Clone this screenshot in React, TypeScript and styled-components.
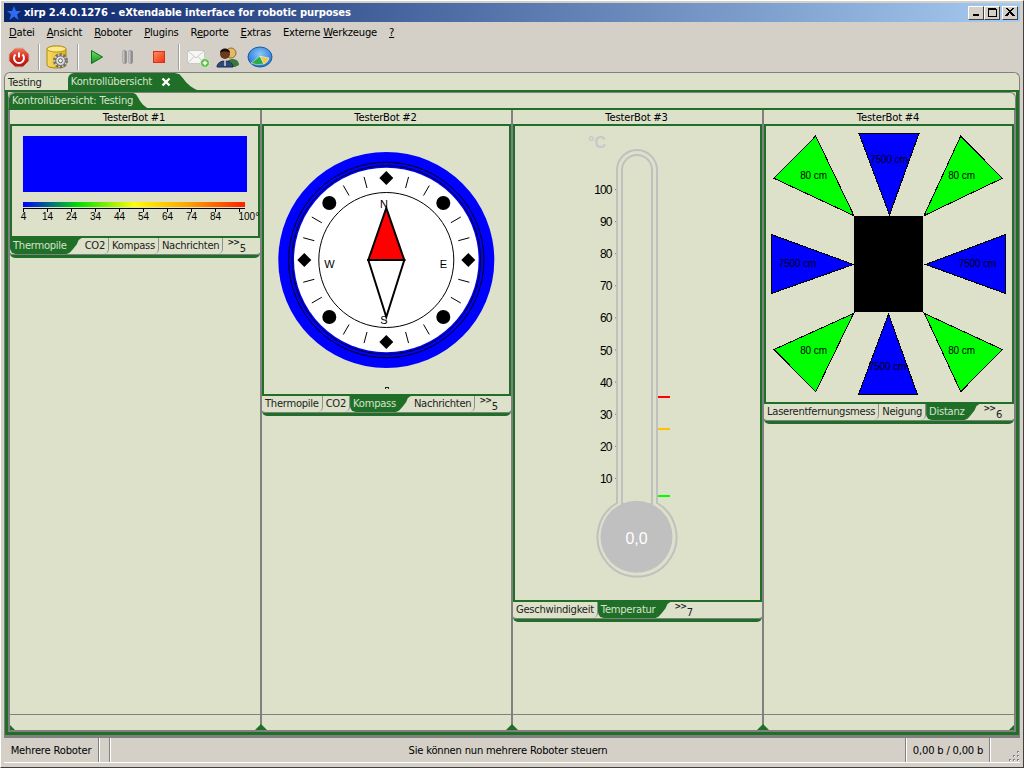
import React from 'react';
import styled, { createGlobalStyle } from 'styled-components';

const Global = createGlobalStyle`
  html, body { margin: 0; padding: 0; background: #d4d0c8; }
  #root { width: 1024px; height: 768px; overflow: hidden; }
  * { box-sizing: border-box; }
`;

const UI = `"DejaVu Sans", "Liberation Sans", sans-serif`;
const ARIAL = `"Liberation Sans", sans-serif`;
const GREEN = '#1f6f28';
const LIGHT = '#dde1ca';
const GREY = '#808080';

const tailClip = (t: number) =>
  `polygon(0 0, calc(100% - ${t}px) 0, calc(100% - ${t * 0.8}px) 8%, calc(100% - ${t * 0.65}px) 30%, calc(100% - ${t * 0.5}px) 55%, calc(100% - ${t * 0.3}px) 78%, calc(100% - ${t * 0.12}px) 92%, 100% 100%, 0 100%)`;

const Win = styled.div`
  width: 1024px; height: 768px; display: flex; flex-direction: column;
  background: #d4d0c8; font-family: ${UI}; font-size: 10px; letter-spacing: -0.2px; color: #000;
  padding: 2px 3px 4px 3px; border-right: 1px solid #404040; border-bottom: 1px solid #404040;
  border-left: 1px solid #fff; border-top: 1px solid #fff;
`;
const TitleBar = styled.div`
  height: 19px; flex: none; display: flex; align-items: center; gap: 3px; padding: 0 2px 0 3px;
  background: linear-gradient(90deg, #0a246a, #a6caf0);
  color: #fff; font: bold 10px "DejaVu Sans", sans-serif; letter-spacing: -0.12px;
`;
const TitleText = styled.span`flex: 1;`;
const WinBtns = styled.div`display: flex;`;
const WinBtn = styled.div<{ $gap?: boolean }>`
  width: 16px; height: 14px; margin-left: ${p => (p.$gap ? 2 : 0)}px; background: #d4d0c8;
  border: 1px solid; border-color: #fff #404040 #404040 #fff; display: flex; align-items: center; justify-content: center;
`;
const Menu = styled.div`
  height: 20px; flex: none; display: flex; align-items: center; gap: 12px; padding: 1px 0 0 5px;
`;
const U = styled.span`text-decoration: underline;`;
const Toolbar = styled.div`
  height: 30px; flex: none; display: flex; align-items: center; padding-left: 1px;
`;
const ToolIcon = styled.svg<{ $w?: number }>`width: ${p => p.$w ?? 31}px; height: 26px; flex: none;`;
const ToolSep = styled.div`width: 2px; height: 26px; flex: none; background: #a0a0a0; border-right: 1px solid #fff;`;

const Folder = styled.div`
  flex: 1; min-height: 0; display: flex; flex-direction: column;
`;
const TabStrip = styled.div<{ $h: number }>`
  height: ${p => p.$h}px; flex: none; display: flex; background: ${LIGHT};
  border-top: 1px solid ${GREY}; border-right: 1px solid ${GREY}; border-left: 1px solid ${GREY};
  border-radius: 6px 6px 0 0; overflow: hidden; border-bottom: 2px solid ${GREEN};
`;
const Tab = styled.div`
  padding: 1px 26px 0 3px; display: flex; align-items: center; white-space: nowrap; color: #222;
`;
const ActiveTab = styled.div<{ $pad: number; $tail: number }>`
  padding: 0 ${p => p.$pad}px 0 3px; display: flex; align-items: center; gap: 9px; white-space: nowrap; color: #d8e2cc;
  background: ${GREEN}; border-radius: 6px 0 0 0;
  clip-path: ${p => tailClip(p.$tail)};
`;
const FolderFrame = styled.div`
  flex: 1; min-height: 0; display: flex; border-left: 1px solid ${GREY}; border-right: 1px solid ${GREY};
`;
const FolderBody = styled.div`
  flex: 1; min-width: 0; display: flex; flex-direction: column;
  border: 3px solid ${GREEN}; border-top: 0;
`;
const InnerBody = styled.div`
  flex: 1; min-height: 0; position: relative; background: ${LIGHT};
  display: grid; grid-template-columns: 252px 251px 251px 250px;
  border-style: solid; border-color: transparent ${GREY} ${GREY} ${GREY};
  border-width: 0 2px 2px 2px;
  &::before, &::after {
    content: ''; position: absolute; bottom: 0; width: 5px; height: 5px; background: ${GREEN}; z-index: 2;
  }
  &::before { left: 0; clip-path: polygon(0 0, 100% 100%, 0 100%); }
  &::after { right: 0; clip-path: polygon(100% 0, 100% 100%, 0 100%); }
`;
const Column = styled.div`
  position: relative; display: flex; flex-direction: column; min-height: 0; min-width: 0; border-right: 2px solid ${GREY};
  &:last-child { border-right: 0; }
`;
const ColHead = styled.div`
  height: 14px; flex: none; display: flex; align-items: center; justify-content: center; padding: 1px 2px 0 0;
`;
const Panel = styled.div<{ $h: number }>`
  height: ${p => p.$h}px; flex: none; border: 2px solid ${GREEN}; position: relative;
`;
const Drawing = styled.svg`display: block; position: absolute; left: 0; top: 0; letter-spacing: 0;`;
const MiniTabs = styled.div`
  height: 20px; flex: none; display: flex; background: ${LIGHT}; letter-spacing: -0.28px;
  border-bottom: 3px solid ${GREEN}; border-radius: 0 0 5px 5px; overflow: hidden;
  box-shadow: inset 0 -1px 0 ${GREY};
`;
const MiniTab = styled.div`
  padding: 0 3px 1px 3px; display: flex; align-items: center; white-space: nowrap; color: #222;
  border-right: 1px solid #909090; height: 16px; border-bottom-right-radius: 5px;
`;
const MiniActive = styled.div`
  padding: 0 15px 1px 3px; display: flex; align-items: center; white-space: nowrap; color: #d8e2cc; background: ${GREEN};
  height: 16px; border-bottom-left-radius: 6px;
  clip-path: polygon(0 0, 100% 0, calc(100% - 3px) 12%, calc(100% - 5px) 40%, calc(100% - 9px) 72%, calc(100% - 12px) 92%, calc(100% - 15px) 100%, 0 100%);
`;
const More = styled.div`
  height: 17px; display: flex; margin-left: 4px; color: #222;
`;
const MoreArrows = styled.span`font-weight: bold; font-size: 8px; line-height: 10px; letter-spacing: -1px;`;
const MoreCount = styled.span`align-self: flex-end; line-height: 12px; margin-left: 1px;`;
const Filler = styled.div`flex: 1; min-height: 0;`;
const ColFoot = styled.div`height: 16px; flex: none; border-top: 1px solid ${GREY};`;
const Notch = styled.div`
  position: absolute; right: -7px; bottom: 0; width: 12px; height: 6px; background: ${GREEN}; z-index: 2;
  clip-path: polygon(50% 0, 100% 100%, 0 100%);
`;
const StatusBar = styled.div`
  height: 28px; flex: none; display: flex; border-top: 3px solid ${GREY}; border-bottom: 1px solid #fff;
`;
const Cell = styled.div<{ $w?: number }>`
  ${p => (p.$w ? `width: ${p.$w}px; flex: none;` : 'flex: 1;')}
  display: flex; align-items: center; justify-content: center; border-right: 1px solid #808080;
  box-shadow: 1px 0 0 #fff; margin-right: 1px;
`;
const GripCell = styled.div`
  width: 29px; flex: none; display: flex; align-items: flex-end; justify-content: flex-end;
`;

const Tri = ({ p, c }: { p: string; c: string }) => <polygon points={p} fill={c} stroke="#000" strokeWidth={1} shapeRendering="crispEdges" />;

const Thermopile = () => {
  const labels = [4, 14, 24, 34, 44, 54, 64, 74, 84];
  return (
    <Drawing width={248} height={110} viewBox="12 126 248 110">
      <defs>
        <linearGradient id="scale">
          <stop offset="0" stopColor="#0000ff" />
          <stop offset="0.25" stopColor="#00e000" />
          <stop offset="0.5" stopColor="#ffff00" />
          <stop offset="0.75" stopColor="#ffa000" />
          <stop offset="1" stopColor="#ff2000" />
        </linearGradient>
      </defs>
      <rect x={23} y={136} width={224} height={56} fill="#0000ff" />
      <rect x={23} y={202} width={222} height={5} fill="url(#scale)" />
      <rect x={23} y={208} width={222} height={1} fill="#000" />
      {[...labels, 100].map((l, i) => (
        <rect key={l} x={23 + i * 24} y={208} width={1} height={4} fill="#000" />
      ))}
      {labels.map((l, i) => (
        <text key={l} x={23.5 + i * 24} y={220} textAnchor="middle" fontSize={10} fontFamily={ARIAL}>{l}</text>
      ))}
      <text x={238.5} y={220} fontSize={10} fontFamily={ARIAL}>100°</text>
    </Drawing>
  );
};

const Compass = () => {
  const cx = 386.3, cy = 260;
  const ticks = [15, 30, 60, 75, 105, 120, 150, 165, 195, 210, 240, 255, 285, 300, 330, 345];
  const dots: [number, number][] = [[-57, -57], [57, -57], [-57, 57], [57, 57]];
  const dia: [number, number][] = [[0, -82], [82, 0], [0, 82], [-82, 0]];
  return (
    <Drawing width={246} height={268} viewBox="264 126 246 268">
      <circle cx={cx} cy={cy} r={108} fill="#0000ff" />
      <circle cx={cx} cy={cy} r={97.7} fill="none" stroke="#000" />
      <circle cx={cx} cy={cy} r={94.3} fill="none" stroke="#000" />
      <circle cx={cx} cy={cy} r={92.3} fill="#fff" />
      <circle cx={cx} cy={cy} r={67.5} fill="none" stroke="#000" />
      {ticks.map(a => {
        const r = (a * Math.PI) / 180;
        return <line key={a} x1={cx + 74.5 * Math.sin(r)} y1={cy - 74.5 * Math.cos(r)} x2={cx + 86 * Math.sin(r)} y2={cy - 86 * Math.cos(r)} stroke="#000" />;
      })}
      {dots.map(([x, y]) => <circle key={`${x}${y}`} cx={cx + x} cy={cy + y} r={7} fill="#000" />)}
      {dia.map(([x, y]) => <polygon key={`${x}${y}`} fill="#000" points={`${cx + x},${cy + y - 7} ${cx + x + 7},${cy + y} ${cx + x},${cy + y + 7} ${cx + x - 7},${cy + y}`} />)}
      <text x={384} y={208} fontSize={11} fontFamily={ARIAL} textAnchor="middle">N</text>
      <text x={384} y={324} fontSize={11} fontFamily={ARIAL} textAnchor="middle">S</text>
      <text x={329.5} y={268} fontSize={11} fontFamily={ARIAL} textAnchor="middle">W</text>
      <text x={443.5} y={268} fontSize={11} fontFamily={ARIAL} textAnchor="middle">E</text>
      <polygon points={`${cx - 18},${cy} ${cx},${cy - 52} ${cx + 18},${cy}`} fill="#ff0000" stroke="#000" strokeWidth={2} />
      <polygon points={`${cx - 18},${cy} ${cx},${cy + 57} ${cx + 18},${cy}`} fill="#fff" stroke="#000" strokeWidth={2} />
      <rect x={385} y={387} width={4} height={1} fill="#222" />
      <rect x={385} y={388} width={1} height={1} fill="#222" />
      <rect x={388} y={388} width={1} height={1} fill="#222" />
    </Drawing>
  );
};

const Thermometer = () => {
  const vals = [100, 90, 80, 70, 60, 50, 40, 30, 20, 10];
  return (
    <Drawing width={246} height={474} viewBox="515 126 246 474">
      <text x={597} y={148} textAnchor="middle" fontFamily={ARIAL} fontWeight="bold" fontSize={16} fill="#c8c8c8">°C</text>
      <path d="M617 170 A20 20 0 0 1 657 170 V503 A39.5 39.5 0 1 1 617 503 Z" fill="none" stroke="#c0c0c0" strokeWidth={2} />
      <path d="M622 170 A15 15 0 0 1 652 170 V504 H622 Z" fill="none" stroke="#c0c0c0" strokeWidth={2} />
      <circle cx={636.5} cy={536.7} r={36} fill="#c0c0c0" />
      {vals.map((v, i) => (
        <g key={v}>
          <text x={611.5} y={194 + i * 32.1} textAnchor="end" fontSize={12} letterSpacing={-0.9} fontFamily={ARIAL}>{v}</text>
          <rect x={615} y={189 + i * 32.1} width={1} height={1} fill="#808080" />
        </g>
      ))}
      <rect x={658} y={396} width={12} height={2} fill="#ff0000" />
      <rect x={658} y={428} width={12} height={2} fill="#ffc000" />
      <rect x={658} y={495} width={12} height={2} fill="#00ff00" />
      <text x={636.5} y={544} textAnchor="middle" fontSize={16} fill="#fff" fontFamily={ARIAL}>0,0</text>
    </Drawing>
  );
};

const Distance = () => {
  const blue = '#0000ff', green = '#00ff00';
  const labels: [number, number, string][] = [
    [813.5, 179, '80 cm'], [889, 163, '7500 cm'], [961.5, 179, '80 cm'],
    [797.5, 266.5, '7500 cm'], [977.5, 266.5, '7500 cm'],
    [813.5, 354, '80 cm'], [887.5, 370, '7500 cm'], [961.5, 354, '80 cm'],
  ];
  return (
    <Drawing width={246} height={276} viewBox="766 126 246 276">
      <Tri c={blue} p="859,133.5 919,133.5 889.5,215" />
      <Tri c={green} p="815.7,136 774,178.3 854,215.7" />
      <Tri c={green} p="960.7,136 1002.3,178.3 924,215.7" />
      <Tri c={blue} p="771.5,234.5 771.5,293.5 853.5,264.5" />
      <Tri c={blue} p="1005.5,234.5 1005.5,293.5 925.5,264.5" />
      <rect x={854} y={216} width={69} height={96} fill="#000" />
      <Tri c={green} p="853.5,313.5 774,349.5 815.7,391.7" />
      <Tri c={green} p="924.5,313.5 1002.3,349.5 960.7,391.7" />
      <Tri c={blue} p="888.5,314 858.5,394.5 917.5,394.5" />
      {labels.map(([x, y, t]) => (
        <text key={`${x}${y}`} x={x} y={y} textAnchor="middle" fontSize={10} letterSpacing={-0.1} fontFamily={ARIAL}>{t}</text>
      ))}
    </Drawing>
  );
};

const WinGlyph = ({ d }: { d: string }) => (
  <svg width={10} height={9} viewBox="0 0 10 9"><path d={d} fill="none" stroke="#000" strokeWidth={1} shapeRendering="crispEdges" /></svg>
);

const columns = [
  {
    title: 'TesterBot #1', h: 114, draw: <Thermopile />,
    tabs: [['Thermopile', true], ['CO2', false], ['Kompass', false], ['Nachrichten', false]] as [string, boolean][], more: '5',
  },
  {
    title: 'TesterBot #2', h: 272, draw: <Compass />,
    tabs: [['Thermopile', false], ['CO2', false], ['Kompass', true], ['Nachrichten', false]] as [string, boolean][], more: '5',
  },
  {
    title: 'TesterBot #3', h: 478, draw: <Thermometer />,
    tabs: [['Geschwindigkeit', false], ['Temperatur', true]] as [string, boolean][], more: '7',
  },
  {
    title: 'TesterBot #4', h: 280, draw: <Distance />,
    tabs: [['Laserentfernungsmess', false], ['Neigung', false], ['Distanz', true]] as [string, boolean][], more: '6',
  },
];

export default function App() {
  return (
    <Win>
      <Global />
      <TitleBar>
        <svg width={14} height={14} viewBox="0 0 14 14"><polygon points="7,0 9,5 14,5 10,8.5 11.5,14 7,10.5 2.5,14 4,8.5 0,5 5,5" fill="#2f6cf0" /></svg>
        <TitleText>xirp 2.4.0.1276 - eXtendable interface for robotic purposes</TitleText>
        <WinBtns>
          <WinBtn><WinGlyph d="M2 7.5H8M2 6.5H8" /></WinBtn>
          <WinBtn><WinGlyph d="M1 1.5H9V8H1ZM1 0.5H9" /></WinBtn>
          <WinBtn $gap><WinGlyph d="M1.5 0.5L8.5 8M2.5 0.5L9.5 8M8.5 0.5L1.5 8M7.5 0.5L0.5 8" /></WinBtn>
        </WinBtns>
      </TitleBar>
      <Menu>
        <span><U>D</U>atei</span><span><U>A</U>nsicht</span><span><U>R</U>oboter</span><span><U>P</U>lugins</span>
        <span>R<U>e</U>porte</span><span><U>E</U>xtras</span><span>Externe <U>W</U>erkzeuge</span><span><U>?</U></span>
      </Menu>
      <Toolbar>
        <ToolIcon $w={33} viewBox="0 0 33 26">
          <defs>
            <linearGradient id="pw" x1="0" y1="0" x2="0" y2="1"><stop offset="0" stopColor="#f07a60" /><stop offset="0.5" stopColor="#d8281c" /><stop offset="1" stopColor="#b01810" /></linearGradient>
          </defs>
          <polygon points="10,4 18,4 24,10 24,17 18,23 10,23 4,17 4,10" fill="url(#pw)" stroke="#c8b8b0" />
          <path d="M10.5 10.5 A5 5 0 1 0 17.5 10.5 M14 8.5 V13.5" fill="none" stroke="#fff" strokeWidth={2} />
        </ToolIcon>
        <ToolSep />
        <ToolIcon $w={37} viewBox="0 0 37 26">
          <defs>
            <linearGradient id="db" x1="0" y1="0" x2="1" y2="0"><stop offset="0" stopColor="#f8dc60" /><stop offset="1" stopColor="#e0b020" /></linearGradient>
          </defs>
          <path d="M7 5 C7 1 26 1 26 5 V21 C26 25 7 25 7 21Z" fill="url(#db)" stroke="#a88a10" />
          <ellipse cx={16.5} cy={5} rx={9.5} ry={3} fill="#fbe98a" stroke="#b89a20" />
          <circle cx={20.5} cy={16.7} r={6} fill="#e4e4e4" stroke="#707070" strokeWidth={3} strokeDasharray="2.2 1.6" />
          <circle cx={20.5} cy={16.7} r={4.8} fill="#dcdcdc" stroke="#686868" />
          <circle cx={20.5} cy={16.7} r={2} fill="#f8f8f8" stroke="#606060" />
        </ToolIcon>
        <ToolSep />
        <ToolIcon viewBox="0 0 31 26">
          <defs>
            <linearGradient id="pl" x1="0" y1="0" x2="0" y2="1"><stop offset="0" stopColor="#70e060" /><stop offset="1" stopColor="#109020" /></linearGradient>
            <linearGradient id="pa" x1="0" y1="0" x2="1" y2="0"><stop offset="0" stopColor="#e0e0e0" /><stop offset="1" stopColor="#707070" /></linearGradient>
            <linearGradient id="st" x1="0" y1="0" x2="1" y2="1"><stop offset="0" stopColor="#ff9060" /><stop offset="1" stopColor="#f03010" /></linearGradient>
          </defs>
          <polygon points="12.5,6.5 23.5,13 12.5,19.5" fill="url(#pl)" stroke="#087018" />
        </ToolIcon>
        <ToolIcon viewBox="0 0 31 26">
          <rect x={12.5} y={6.5} width={4} height={13} rx={1.5} fill="url(#pa)" stroke="#888" strokeWidth={0.5} />
          <rect x={18.5} y={6.5} width={4} height={13} rx={1.5} fill="url(#pa)" stroke="#888" strokeWidth={0.5} />
        </ToolIcon>
        <ToolIcon $w={37} viewBox="0 0 37 26">
          <rect x={12.5} y={7.5} width={11} height={11} fill="url(#st)" stroke="#d83018" />
        </ToolIcon>
        <ToolSep />
        <ToolIcon viewBox="0 0 31 26">
          <rect x={7.5} y={6.5} width={17} height={13} fill="#f6f6f4" stroke="#c8c8c4" />
          <path d="M8 7 L16 14 L24 7 M8 19 L14 12.5 M24 19 L18 12.5" fill="none" stroke="#c8c8c4" />
          <circle cx={25} cy={19} r={4.5} fill="#60c050" stroke="#d0e8c8" />
          <path d="M22.8 19H27.2M25 16.8V21.2" stroke="#fff" strokeWidth={1.5} />
        </ToolIcon>
        <ToolIcon viewBox="0 0 31 26">
          <circle cx={20} cy={9} r={5} fill="#e8b868" stroke="#907030" />
          <path d="M15 21 C15 13 28 13 28 21 L24 23 H17Z" fill="#357a3a" />
          <circle cx={14} cy={10} r={5} fill="#6a3a1c" />
          <path d="M9 9 C9 3 19 3 19 9 C17 7 11 7 9 9Z" fill="#181008" />
          <path d="M6 23 C6 15 22 15 22 23Z" fill="#2f4a78" stroke="#1c2c48" />
          <path d="M14 16 V22" stroke="#d0d8e8" strokeWidth={1.5} />
        </ToolIcon>
        <ToolIcon viewBox="0 0 31 26">
          <defs>
            <radialGradient id="pie" cx="0.5" cy="0.35" r="0.7"><stop offset="0" stopColor="#8ac8f8" /><stop offset="1" stopColor="#1468d0" /></radialGradient>
          </defs>
          <ellipse cx={18} cy={13} rx={12} ry={10} fill="url(#pie)" stroke="#1c5aa8" />
          <path d="M18 12 L9 19 A11 6 0 0 0 22 20Z" fill="#2faa48" stroke="#fff" strokeWidth={0.5} />
          <path d="M18 12 L22 20 A10 8 0 0 0 27 14Z" fill="#f0c848" stroke="#fff" strokeWidth={0.5} />
        </ToolIcon>
      </Toolbar>
      <Folder>
        <TabStrip $h={20}>
          <Tab>Testing</Tab>
          <ActiveTab $pad={26} $tail={22}>Kontrollübersicht
            <svg width={10} height={10} viewBox="0 0 10 10"><path d="M1.5 1.5L8.5 8.5M8.5 1.5L1.5 8.5" stroke="#fff" strokeWidth={2.4} /></svg>
          </ActiveTab>
        </TabStrip>
        <FolderFrame>
          <FolderBody>
            <TabStrip $h={18}>
              <ActiveTab $pad={14} $tail={14}>Kontrollübersicht: Testing</ActiveTab>
            </TabStrip>
            <InnerBody>
              {columns.map((c, i) => (
                <Column key={c.title}>
                  <ColHead>{c.title}</ColHead>
                  <Panel $h={c.h}>{c.draw}</Panel>
                  <MiniTabs>
                    {c.tabs.map(([t, on]) => (on ? <MiniActive key={t}>{t}</MiniActive> : <MiniTab key={t}>{t}</MiniTab>))}
                    <More><MoreArrows>&gt;&gt;</MoreArrows><MoreCount>{c.more}</MoreCount></More>
                  </MiniTabs>
                  <Filler />
                  <ColFoot />
                  {i < 3 && <Notch />}
                </Column>
              ))}
            </InnerBody>
          </FolderBody>
        </FolderFrame>
      </Folder>
      <StatusBar>
        <Cell $w={95}>Mehrere Roboter</Cell>
        <Cell $w={10} />
        <Cell>Sie können nun mehrere Roboter steuern</Cell>
        <Cell $w={83}>0,00 b / 0,00 b</Cell>
        <GripCell>
          <svg width={12} height={12} viewBox="0 0 12 12">
            {[[9, 1], [5, 5], [9, 5], [1, 9], [5, 9], [9, 9]].map(([x, y]) => (
              <g key={`${x}${y}`}>
                <rect x={x} y={y} width={2} height={2} fill="#808080" />
                <rect x={x + 1} y={y + 1} width={1} height={1} fill="#fff" />
              </g>
            ))}
          </svg>
        </GripCell>
      </StatusBar>
    </Win>
  );
}
